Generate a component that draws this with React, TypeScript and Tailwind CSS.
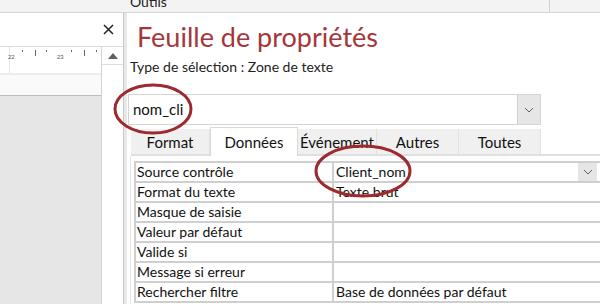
import React from 'react';

const font = "font-['Lato','Open_Sans',sans-serif]";

const rows: { label: string; value: string; combo?: boolean }[] = [
  { label: 'Source contrôle', value: 'Client_nom', combo: true },
  { label: 'Format du texte', value: 'Texte brut' },
  { label: 'Masque de saisie', value: '' },
  { label: 'Valeur par défaut', value: '' },
  { label: 'Valide si', value: '' },
  { label: 'Message si erreur', value: '' },
  { label: 'Rechercher filtre', value: 'Base de données par défaut' },
];

const tabs = [
  { name: 'Format', w: 'w-[79px]' },
  { name: 'Données', w: 'w-[88px]' },
  { name: 'Événement', w: 'w-[79px]' },
  { name: 'Autres', w: 'w-[82px]' },
  { name: 'Toutes', w: 'w-[82px]' },
];

const Chevron = () => (
  <svg width="10" height="6" viewBox="0 0 10 6" fill="none">
    <path d="M1 1l4 4 4-4" stroke="#606060" strokeWidth="1" />
  </svg>
);

const Ruler = () => (
  <svg width="101" height="26" viewBox="0 0 101 26" className="block">
    <line x1="9.5" y1="0" x2="9.5" y2="26" stroke="#e4e4e4" />
    <text x="8" y="12" fontSize="6" fill="#555" fontFamily="Liberation Sans, sans-serif">22</text>
    <text x="57" y="12" fontSize="6" fill="#555" fontFamily="Liberation Sans, sans-serif">23</text>
    {[22, 46, 71, 96].map((x) => (
      <line key={x} x1={x + 0.5} y1="3" x2={x + 0.5} y2="5" stroke="#666" />
    ))}
    {[35, 84].map((x) => (
      <line key={x} x1={x + 0.5} y1="3" x2={x + 0.5} y2="9" stroke="#666" />
    ))}
  </svg>
);

export default function App() {
  return (
    <div className={`relative w-[600px] h-[304px] overflow-hidden bg-white text-black ${font}`}>
      {/* ribbon strip */}
      <div className="flex h-[13px] bg-[#f3f3f3] border-b border-[#d6d6d6]">
        <div className="w-[130px] shrink-0" />
        <div className="w-[419px] shrink-0 text-[14px] leading-[14px] -mt-[5px] text-[#222]">Outils</div>
        <div className="w-px bg-[#cfcfcf]" />
      </div>

      <div className="flex h-[291px]">
        {/* form designer side */}
        <div className="w-[123px] shrink-0 flex flex-col">
          <div className="h-[34px] flex items-center justify-end pr-[9px] border-b border-[#dcdcdc]">
            <svg width="11" height="11" viewBox="0 0 11 11">
              <path d="M1 1l9 9M10 1l-9 9" stroke="#222" strokeWidth="1.5" />
            </svg>
          </div>
          <div className="flex flex-1">
            <div className="w-[101px] flex flex-col">
              <Ruler />
              <div className="h-[23px] bg-[#fafafa] border-t-2 border-b border-t-[#ececec] border-b-[#bdbdbd]" />
              <div className="flex-1 bg-[#e6e6e6]" />
            </div>
            <div className="w-[22px] border-l border-[#d4d4d4] flex flex-col">
              <div className="h-[18px] flex items-center justify-center border-b border-[#dedede]">
                <svg width="10" height="6" viewBox="0 0 10 6">
                  <path d="M0 6L5 0l5 6z" fill="#606060" />
                </svg>
              </div>
            </div>
          </div>
        </div>

        <div className="w-[4px] shrink-0 border-l border-[#c8c8c8] bg-[#e8e8e8]" />

        {/* property sheet */}
        <div className="flex-1 min-w-0 flex flex-col">
          <div className="pl-[10px] pt-[6px] text-[27px] leading-[36px] text-[#a4373a] whitespace-nowrap">
            Feuille de propriétés
          </div>
          <div className="pl-[3px] text-[14px] leading-[18px] text-[#222] mt-[3px] whitespace-nowrap">
            Type de sélection : Zone de texte
          </div>

          <div className="ml-[1px] mt-[18px] w-[413px] h-[31px] flex border border-[#d4d4d4]">
            <div className="flex-1 flex items-center pl-[4px] text-[15px] text-[#111]">nom_cli</div>
            <div className="w-[23px] border-l border-[#cfcfcf] bg-[#e6e6e6] flex items-center justify-center">
              <Chevron />
            </div>
          </div>

          <div className="mt-[2px] ml-[4px] flex items-end h-[29px] border-b-2 border-[#e0e0e0]">
            {tabs.map((t) =>
              t.name === 'Données' ? (
                <div
                  key={t.name}
                  className={`${t.w} h-[29px] -mb-[2px] bg-white border-x border-t border-[#dadada] flex items-center justify-center text-[15px] text-[#111]`}
                >
                  {t.name}
                </div>
              ) : (
                <div
                  key={t.name}
                  className={`${t.w} h-[25px] bg-[#f0f0f0] border-r border-[#e2e2e2] flex items-center justify-center pt-[2px] text-[15px] text-[#111]`}
                >
                  {t.name}
                </div>
              )
            )}
          </div>

          <div className="flex-1 flex pl-[3px] pt-[5px] border-l border-[#e4e4e4] ml-[3px]">
            <div className="w-[500px] shrink-0 border-t-2 border-l-2 border-[#cfcfcf] self-start">
              {rows.map((r) => (
                <div key={r.label} className="grid grid-cols-[198px_1fr] h-[20px] border-b-2 border-[#cfcfcf]">
                  <div className="pl-[1px] text-[14px] leading-[18px] text-[#111] border-r-2 border-[#cfcfcf] whitespace-nowrap">
                    {r.label}
                  </div>
                  <div className="flex">
                    <div className="w-[244px] pl-[2px] text-[14px] leading-[18px] text-[#111] whitespace-nowrap">{r.value}</div>
                    {r.combo && (
                      <div className="w-[19px] bg-[#e6e6e6] flex items-center justify-center">
                        <Chevron />
                      </div>
                    )}
                  </div>
                </div>
              ))}
            </div>
          </div>
        </div>
      </div>

      {/* annotation circles */}
      <svg className="absolute inset-0 pointer-events-none" width="600" height="304" viewBox="0 0 600 304">
        <ellipse cx="153" cy="109" rx="38" ry="24" fill="none" stroke="#9c2a2e" strokeWidth="3" />
        <ellipse cx="363" cy="171" rx="47" ry="25" fill="none" stroke="#9c2a2e" strokeWidth="3" />
      </svg>
    </div>
  );
}
